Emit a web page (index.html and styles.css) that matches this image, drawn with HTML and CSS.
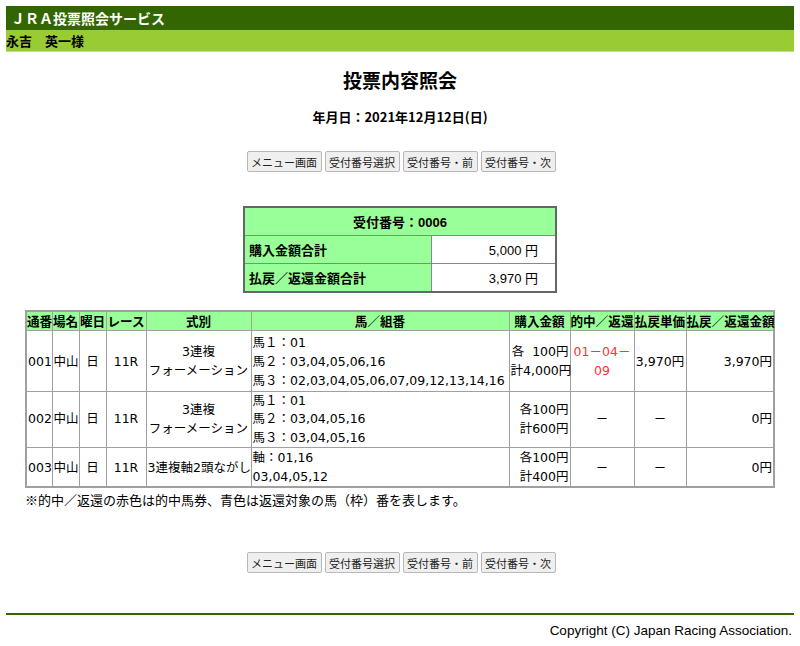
FILE: index.html
```html
<!DOCTYPE html>
<html lang="ja">
<head>
<meta charset="utf-8">
<title>JRA投票照会サービス</title>
<link rel="stylesheet" href="styles.css">
</head>
<body>
<div class="page">
  <div class="topbar">ＪＲＡ投票照会サービス</div>
  <div class="userbar">永吉　英一様</div>

  <h1 class="title">投票内容照会</h1>
  <p class="date">年月日：2021年12月12日(日)</p>

  <div class="btns">
    <button class="btn">メニュー画面</button>
    <button class="btn">受付番号選択</button>
    <button class="btn">受付番号・前</button>
    <button class="btn">受付番号・次</button>
  </div>

  <table class="summary">
    <colgroup><col class="sc1"><col class="sc2"></colgroup>
    <tr><th colspan="2" class="sum-head">受付番号：0006</th></tr>
    <tr><th class="sum-label">購入金額合計</th><td class="sum-val">5,000 円</td></tr>
    <tr><th class="sum-label">払戻／返還金額合計</th><td class="sum-val">3,970 円</td></tr>
  </table>

  <table class="detail">
    <colgroup>
      <col class="c1"><col class="c2"><col class="c3"><col class="c4"><col class="c5">
      <col class="c6"><col class="c7"><col class="c8"><col class="c9"><col class="c10">
    </colgroup>
    <tr class="dhead">
      <th>通番</th><th>場名</th><th>曜日</th><th>レース</th>
      <th>式別</th><th>馬／組番</th><th>購入金額</th>
      <th>的中／返還</th><th>払戻単価</th><th>払戻／返還金額</th>
    </tr>
    <tr class="r1">
      <td class="l">001</td><td class="l">中山</td><td class="c">日</td><td class="c">11R</td>
      <td class="c">3連複<br>フォーメーション</td>
      <td class="l">馬１：01<br>馬２：03,04,05,06,16<br>馬３：02,03,04,05,06,07,09,12,13,14,16</td>
      <td class="r">各&nbsp; 100円<br>計4,000円</td>
      <td class="c hit">01－04－<br>09</td>
      <td class="c">3,970円</td>
      <td class="r">3,970円</td>
    </tr>
    <tr class="r2">
      <td class="l">002</td><td class="l">中山</td><td class="c">日</td><td class="c">11R</td>
      <td class="c">3連複<br>フォーメーション</td>
      <td class="l">馬１：01<br>馬２：03,04,05,16<br>馬３：03,04,05,16</td>
      <td class="r">各100円<br>計600円</td>
      <td class="c">－</td>
      <td class="c">－</td>
      <td class="r">0円</td>
    </tr>
    <tr class="r3">
      <td class="l">003</td><td class="l">中山</td><td class="c">日</td><td class="c">11R</td>
      <td class="c">3連複軸2頭ながし</td>
      <td class="l">軸：01,16<br>03,04,05,12</td>
      <td class="r">各100円<br>計400円</td>
      <td class="c">－</td>
      <td class="c">－</td>
      <td class="r">0円</td>
    </tr>
  </table>
  <p class="note">※的中／返還の赤色は的中馬券、青色は返還対象の馬（枠）番を表します。</p>

  <div class="btns btns-bottom">
    <button class="btn">メニュー画面</button>
    <button class="btn">受付番号選択</button>
    <button class="btn">受付番号・前</button>
    <button class="btn">受付番号・次</button>
  </div>

  <div class="footer">Copyright (C) Japan Racing Association.</div>
</div>
</body>
</html>
```
FILE: styles.css
```css
html, body {
  margin: 0;
  padding: 0;
  background: #ffffff;
}
body {
  font-family: "Noto Sans CJK JP", "Noto Sans", sans-serif;
  font-size: 13px;
  color: #000;
}
.page {
  padding: 6px 6px 0 6px;
}
.topbar {
  background: #336600;
  color: #ffffff;
  font-weight: bold;
  font-size: 14px;
  line-height: 24px;
  height: 24px;
  padding-left: 5px;
}
.userbar {
  background: #99cc33;
  color: #000;
  font-weight: bold;
  font-size: 13px;
  line-height: 21px;
  height: 21px;
  border-bottom: 1px solid #c5e08a;
}
.title {
  margin: 15px 0 0 0;
  text-align: center;
  font-size: 19px;
  line-height: 26px;
  font-weight: bold;
}
.date {
  margin: 15px 0 0 0;
  text-align: center;
  font-size: 13px;
  line-height: 18px;
  font-weight: bold;
}
.btns {
  display: flex;
  justify-content: center;
  gap: 3px;
  margin-top: 25px;
  padding-left: 2px;
}
.btn {
  font-family: "Noto Sans CJK JP", sans-serif;
  font-size: 11px;
  line-height: 14px;
  height: 21px;
  padding: 2px 3.5px;
  background: #efefef;
  border: 1px solid #b8b8b8;
  border-radius: 2px;
  color: #222;
  white-space: nowrap;
}
.summary {
  margin: 34px auto 0 auto;
  border-collapse: collapse;
  border: 2px solid #666;
  width: 312px;
  table-layout: fixed;
  font-family: "Liberation Sans", "Noto Sans CJK JP", sans-serif;
}
.sc1 { width: 188px; }
.sc2 { width: 124px; }
.summary th, .summary td {
  border: 1px solid #888;
  height: 27px;
  padding: 0 4px;
  font-size: 13px;
}
.sum-head {
  background: #99ff99;
  text-align: center;
  font-weight: bold;
}
.sum-label {
  background: #99ff99;
  text-align: left;
  font-weight: bold;
}
.sum-val {
  text-align: right;
  padding-right: 17px !important;
  background: #fff;
}
.detail {
  margin: 17px 0 0 19px;
  border-collapse: collapse;
  border: 2px solid #a0a0a0;
  width: 750px;
  table-layout: fixed;
  font-family: "DejaVu Sans", "Noto Sans CJK JP", sans-serif;
}
.detail th, .detail td {
  border: 1px solid #a0a0a0;
  padding: 0 1px;
  font-size: 12.5px;
  line-height: 19px;
  white-space: nowrap;
}
.dhead th {
  background: #99ff99;
  font-weight: bold;
  text-align: center;
  height: 18px;
  line-height: 18px;
  font-family: "Noto Sans CJK JP", sans-serif;
  font-size: 12.6px;
  padding: 0;
}
.c1 { width: 26px; }
.c2 { width: 27px; }
.c3 { width: 27px; }
.c4 { width: 40px; }
.c5 { width: 105px; }
.c6 { width: 258px; }
.c7 { width: 61px; }
.c8 { width: 64px; }
.c9 { width: 52px; }
.c10 { width: 88px; }
.detail td.l { text-align: left; }
.detail td.c { text-align: center; }
.detail td.r { text-align: right; }
.hit { color: #ff3333; }
.r1 td { height: 60px; }
.r2 td { height: 55px; line-height: 18.3px; }
.r3 td { height: 38px; }
.note {
  margin: 2px 0 0 19px;
  font-size: 13px;
  line-height: 19px;
}
.btns-bottom {
  margin-top: 43px;
}
.footer {
  margin-top: 40px;
  border-top: 2px solid #336600;
  text-align: right;
  font-family: "Liberation Sans", sans-serif;
  font-size: 13.5px;
  line-height: 18px;
  padding-top: 7px;
  padding-right: 2px;
}
```
